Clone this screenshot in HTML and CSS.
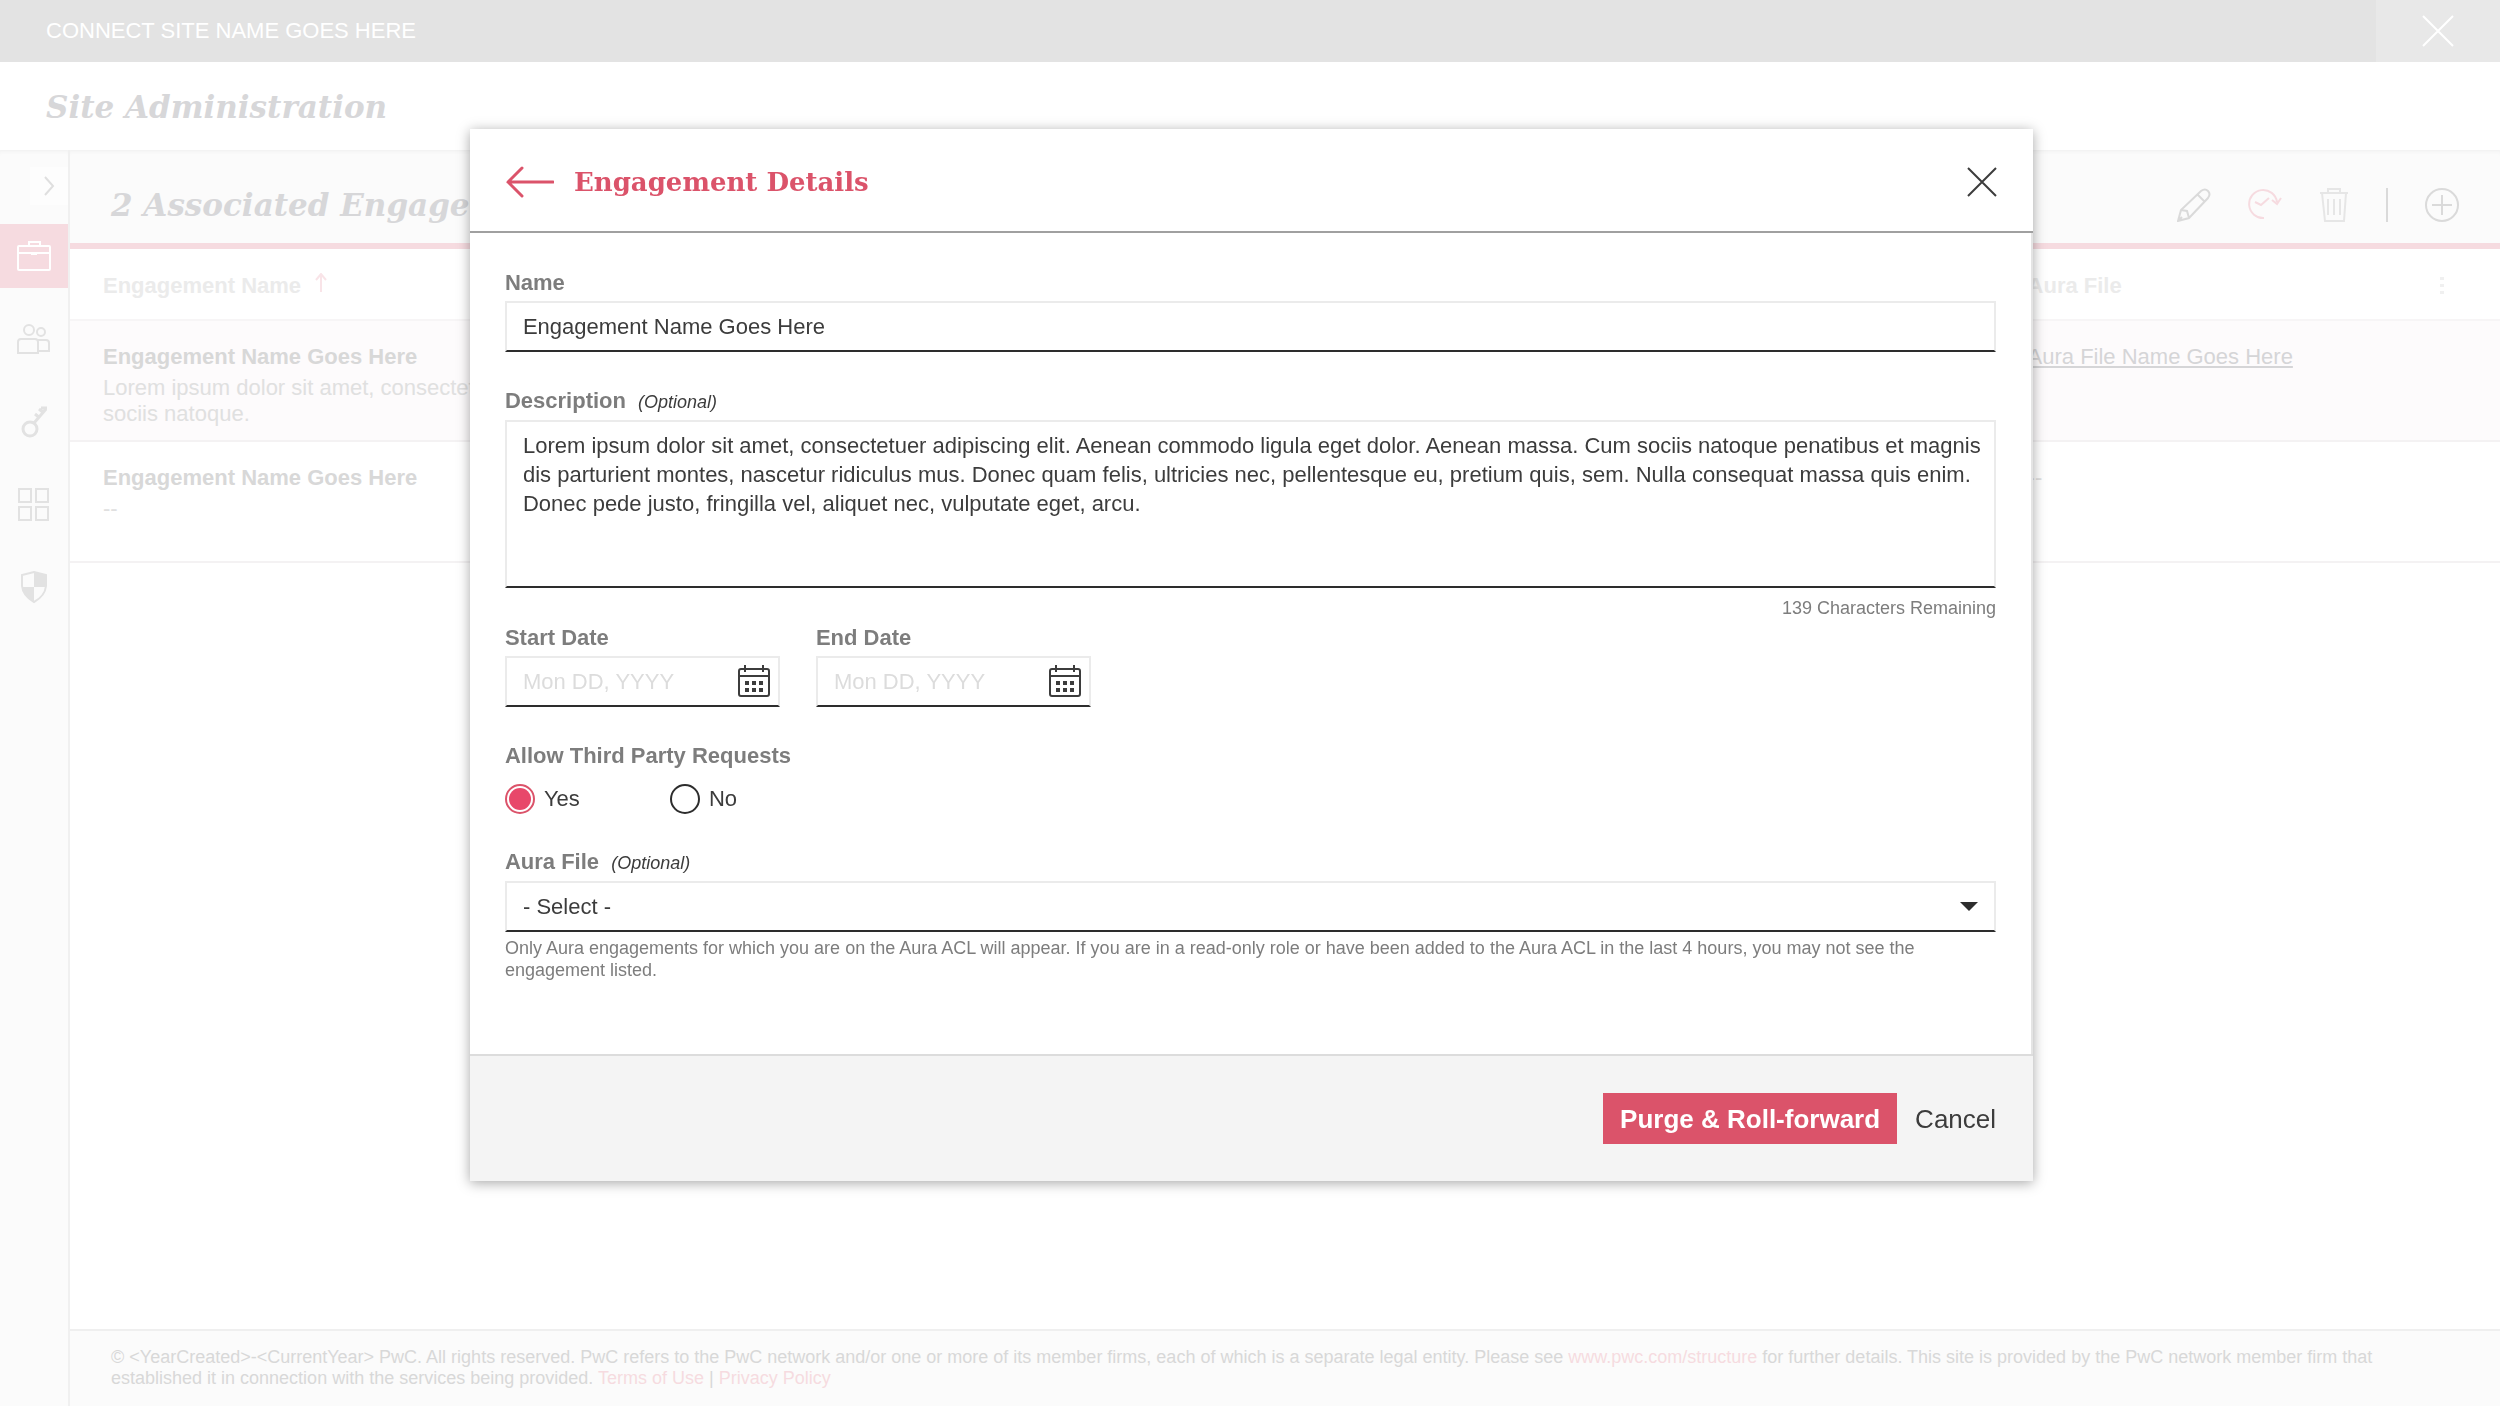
FILE: index.html
```html
<!DOCTYPE html>
<html lang="en">
<head>
    <meta charset="UTF-8">
    <meta name="viewport" content="width=device-width, initial-scale=1.0">
    <title>Site Administration</title>
    <link rel="stylesheet" href="styles.css">
</head>
<body>
    <div class="page">
        <header class="top-bar">
            <span class="site-name">CONNECT SITE NAME GOES HERE</span>
            <button class="top-close" aria-label="Close site">
                <svg width="32" height="32" viewBox="0 0 32 32"><path d="M1 1L31 31M31 1L1 31"/></svg>
            </button>
        </header>
        <div class="page-title">
            <h1>Site Administration</h1>
        </div>

        <div class="layout">
            <nav class="sidebar">
                <button class="toggle" aria-label="Expand menu">
                    <svg width="12" height="20" viewBox="0 0 12 20"><path d="M2 1L10 10L2 19"/></svg>
                </button>
                <a href="#" class="nav-item active" aria-label="Engagements">
                    <svg width="34" height="32" viewBox="0 0 34 32"><rect x="1" y="6" width="32" height="24" rx="1"/><path d="M12 6V2H23V6M1 13H33"/><path class="fill" d="M14 13H20V15H14Z"/></svg>
                </a>
                <a href="#" class="nav-item" aria-label="Users">
                    <svg width="34" height="32" viewBox="0 0 34 32"><circle cx="12" cy="7" r="5"/><circle cx="24" cy="9" r="4"/><path d="M1 30V19Q1 16 4 16H18Q21 16 21 19V30ZM21 17H29Q32 17 32 20V28H21"/></svg>
                </a>
                <a href="#" class="nav-item" aria-label="Permissions">
                    <svg class="key" width="34" height="32" viewBox="0 0 34 32"><circle cx="13" cy="23" r="7"/><path d="M17 17L29 3M22 3L27 7M18 8L23 12M24 2H30"/></svg>
                </a>
                <a href="#" class="nav-item" aria-label="Apps">
                    <svg width="34" height="34" viewBox="0 0 34 34"><path d="M2 1H14V14H2ZM19 1H31V14H19ZM2 19H14V32H2ZM19 19H31V32H19Z"/></svg>
                </a>
                <a href="#" class="nav-item" aria-label="Security">
                    <svg width="34" height="34" viewBox="0 0 34 34"><path d="M17 1L29 4V15Q28 25 17 31Q6 25 5 15V4Z"/><path class="fill" d="M17 1L29 4V16H17ZM17 16V31Q6 25 5 16Z"/></svg>
                </a>
            </nav>

            <div class="content">
                <div class="section-head">
                    <h2>2 Associated Engagements</h2>
                    <div class="actions">
                        <button aria-label="Edit">
                            <svg width="34" height="34" viewBox="0 0 34 34"><path d="M1 33L4 22L24 3Q28 0 31 3Q34 6 31 10L12 30ZM20 6L28 14M4 22L10 23L12 30M1 33L5 29"/></svg>
                        </button>
                        <button class="roll" aria-label="Roll-forward">
                            <svg width="34" height="34" viewBox="0 0 34 34"><path d="M16 30A14 14 0 1 1 29 14M24 12L29 16L33 10M7 14L13 17L21 10"/></svg>
                        </button>
                        <button class="trash" aria-label="Delete">
                            <svg width="30" height="34" viewBox="0 0 30 34"><path d="M1 5H29M9 5V1H21V5M3 5L6 33H25L27 5M9 11V27M15 11V27M21 11V27"/></svg>
                        </button>
                        <span class="divider"></span>
                        <button aria-label="Add">
                            <svg width="34" height="34" viewBox="0 0 34 34"><circle cx="17" cy="17" r="16"/><path d="M7 17H27M17 7V27"/></svg>
                        </button>
                    </div>
                </div>

                <table class="engagements">
                    <thead>
                        <tr>
                            <th class="col-name">Engagement Name
                                <svg class="sort" width="12" height="20" viewBox="0 0 12 20"><path d="M6 19V1M1 7L6 1L11 7"/></svg>
                            </th>
                            <th class="col-file">
                                <div class="file-head">Aura File
                                    <button class="more" aria-label="Column options">
                                        <svg width="4" height="18" viewBox="0 0 4 18"><path d="M0 0H4V3H0ZM0 7H4V10H0ZM0 14H4V17H0Z"/></svg>
                                    </button>
                                </div>
                            </th>
                        </tr>
                    </thead>
                    <tbody>
                        <tr class="selected">
                            <td>
                                <strong>Engagement Name Goes Here</strong>
                                <p>Lorem ipsum dolor sit amet, consectetuer elit.<br>sociis natoque.</p>
                            </td>
                            <td><a href="#">Aura File Name Goes Here</a></td>
                        </tr>
                        <tr>
                            <td>
                                <strong>Engagement Name Goes Here</strong>
                                <p>--</p>
                            </td>
                            <td>--</td>
                        </tr>
                    </tbody>
                </table>

                <footer class="page-footer">
                    © &lt;YearCreated&gt;-&lt;CurrentYear&gt; PwC. All rights reserved. PwC refers to the PwC network and/or one or more of its member firms, each of which is a separate legal entity. Please see <a href="#">www.pwc.com/structure</a> for further details. This site is provided by the PwC network member firm that established it in connection with the services being provided. <a href="#">Terms of Use</a> | <a href="#">Privacy Policy</a>
                </footer>
            </div>
        </div>
    </div>

    <div class="overlay">
        <form class="modal" role="dialog" aria-labelledby="modalTitle">
            <div class="modal-head">
                <button type="button" class="back" aria-label="Back">
                    <svg width="48" height="32" viewBox="0 0 48 32"><path d="M47 16H2M16 2L2 16L16 30"/></svg>
                </button>
                <h2 id="modalTitle">Engagement Details</h2>
                <button type="button" class="modal-close" aria-label="Close">
                    <svg width="30" height="30" viewBox="0 0 30 30"><path d="M1 1L29 29M29 1L1 29"/></svg>
                </button>
            </div>

            <div class="modal-body">
                <div class="field">
                    <label for="name">Name</label>
                    <input type="text" id="name" value="Engagement Name Goes Here">
                </div>

                <div class="field description">
                    <label for="description">Description <em>(Optional)</em></label>
                    <textarea id="description">Lorem ipsum dolor sit amet, consectetuer adipiscing elit. Aenean commodo ligula eget dolor. Aenean massa. Cum sociis natoque penatibus et magnis dis parturient montes, nascetur ridiculus mus. Donec quam felis, ultricies nec, pellentesque eu, pretium quis, sem. Nulla consequat massa quis enim. Donec pede justo, fringilla vel, aliquet nec, vulputate eget, arcu.</textarea>
                    <p class="remaining">139 Characters Remaining</p>
                </div>

                <div class="dates">
                    <div class="field">
                        <label for="startDate">Start Date</label>
                        <div class="date-box">
                            <input type="text" id="startDate" placeholder="Mon DD, YYYY">
                            <button type="button" aria-label="Pick start date">
                                <svg width="34" height="34" viewBox="0 0 34 34"><rect x="2" y="5" width="30" height="27" rx="2"/><path d="M2 12H32M8 1V8M26 1V8"/><path class="fill" d="M8 17H12V21H8ZM15 17H19V21H15ZM22 17H26V21H22ZM8 24H12V28H8ZM15 24H19V28H15ZM22 24H26V28H22Z"/></svg>
                            </button>
                        </div>
                    </div>
                    <div class="field">
                        <label for="endDate">End Date</label>
                        <div class="date-box">
                            <input type="text" id="endDate" placeholder="Mon DD, YYYY">
                            <button type="button" aria-label="Pick end date">
                                <svg width="34" height="34" viewBox="0 0 34 34"><rect x="2" y="5" width="30" height="27" rx="2"/><path d="M2 12H32M8 1V8M26 1V8"/><path class="fill" d="M8 17H12V21H8ZM15 17H19V21H15ZM22 17H26V21H22ZM8 24H12V28H8ZM15 24H19V28H15ZM22 24H26V28H22Z"/></svg>
                            </button>
                        </div>
                    </div>
                </div>

                <fieldset class="third-party">
                    <legend>Allow Third Party Requests</legend>
                    <div class="radios">
                        <label><input type="radio" name="thirdParty" value="yes" checked>Yes</label>
                        <label><input type="radio" name="thirdParty" value="no">No</label>
                    </div>
                </fieldset>

                <div class="field">
                    <label for="auraFile">Aura File <em>(Optional)</em></label>
                    <div class="select-box">
                        <select id="auraFile">
                            <option>- Select -</option>
                        </select>
                    </div>
                    <p class="help">Only Aura engagements for which you are on the Aura ACL will appear. If you are in a read-only role or have been added to the Aura ACL in the last 4 hours, you may not see the engagement listed.</p>
                </div>
            </div>

            <div class="modal-foot">
                <button type="submit" class="primary">Purge &amp; Roll-forward</button>
                <button type="button" class="cancel">Cancel</button>
            </div>
        </form>
    </div>
</body>
</html>
```
FILE: styles.css
```css
* {
    box-sizing: border-box;
}

body {
    margin: 0;
    background: #fff;
    font-family: Arial, "Liberation Sans", sans-serif;
    font-size: 22px;
    line-height: 26px;
    color: #3c3c3c;
}

h1, h2, p {
    margin: 0;
}

h1, h2 {
    font-family: Georgia, "DejaVu Serif", serif;
    font-weight: bold;
}

button {
    padding: 0;
    border: none;
    background: none;
    font: inherit;
    color: inherit;
    cursor: pointer;
}

svg {
    display: block;
    fill: none;
    stroke: currentColor;
    stroke-width: 2;
}

svg .fill {
    fill: currentColor;
    stroke: none;
}

/* Page behind the dialog */
.page {
    display: flex;
    flex-direction: column;
    min-height: 100vh;
}

.top-bar {
    display: flex;
    justify-content: space-between;
    height: 62px;
    background: #e3e3e3;
    color: #fff;
}

.site-name {
    padding: 18px 46px;
}

.top-close {
    display: flex;
    align-items: center;
    justify-content: center;
    width: 124px;
    background: #e8e8e8;
}

.page-title {
    height: 88px;
    padding: 23px 46px;
}

h1, .section-head h2 {
    font-size: 31px;
    line-height: 44px;
    font-style: italic;
    color: #d7d7d9;
}

.layout {
    display: flex;
    flex: 1;
}

.sidebar {
    display: flex;
    flex-direction: column;
    gap: 19px;
    width: 70px;
    padding-top: 17px;
    border-right: 2px solid #f0f0f0;
    background: #fbfbfb;
    box-shadow: inset 0 4px 4px -3px #eee;
    color: #e2e2e2;
}

.toggle {
    display: flex;
    align-items: center;
    justify-content: center;
    align-self: flex-end;
    width: 38px;
    height: 38px;
    background: #fdfdfd;
    color: #dfdfdf;
}

.nav-item {
    display: flex;
    align-items: center;
    justify-content: center;
    height: 64px;
    color: inherit;
}

.nav-item.active {
    background: #f6dbe0;
    color: #fff;
}

.key {
    stroke-width: 3;
}

.content {
    display: flex;
    flex-direction: column;
    flex: 1;
}

.section-head {
    display: flex;
    align-items: center;
    justify-content: space-between;
    height: 99px;
    padding: 16px 41px 0 41px;
    border-bottom: 6px solid #f6dbe0;
    background: #fbfbfb;
    box-shadow: inset 0 4px 4px -3px #eee;
}

.actions {
    display: flex;
    align-items: center;
    gap: 37px;
    color: #dadada;
}

.roll {
    color: #f6dbe0;
}

.trash {
    color: #e6e6e6;
}

.divider {
    width: 2px;
    height: 34px;
    background: #dadada;
}

.engagements {
    width: 100%;
    border-collapse: collapse;
    table-layout: fixed;
    text-align: left;
    color: #e0e0e0;
}

.engagements th {
    height: 71px;
    padding: 4px 0 0 33px;
    color: #ebebeb;
    border-bottom: 2px solid #f7f5f6;
}

.engagements td {
    height: 121px;
    padding: 23px 33px 0;
    border-bottom: 2px solid #f4f2f3;
    vertical-align: top;
}

.engagements .col-file {
    width: 20.8%;
}

.engagements strong {
    color: #d8d8d8;
}

.engagements p {
    padding-top: 5px;
}

.engagements a {
    color: #d5d5d7;
}

.selected {
    background: #fdfbfc;
}

.sort {
    display: inline-block;
    margin-left: 8px;
    color: #f9e4e8;
}

.file-head {
    display: flex;
    align-items: center;
    justify-content: space-between;
    padding-right: 56px;
}

.more svg {
    fill: #f0f0f0;
    stroke: none;
}

.page-footer {
    margin-top: auto;
    min-height: 77px;
    padding: 16px 41px;
    border-top: 2px solid #efefef;
    background: #fbfbfb;
    font-size: 18px;
    line-height: 21px;
    color: #d8d8d8;
}

.page-footer a {
    color: #f6dbe0;
    text-decoration: none;
}

/* Dialog */
.overlay {
    position: fixed;
    inset: 0;
    padding: 129px 0 0 3px;
    overflow: auto;
}

.modal {
    width: 62.6%;
    margin: 0 auto;
    background: #fff;
    box-shadow: 0 2px 12px rgba(0, 0, 0, 0.35);
}

.modal-head {
    display: flex;
    align-items: center;
    height: 104px;
    padding: 3px 36px 0;
    border-bottom: 2px solid #a0a0a0;
}

.modal-head h2 {
    margin-left: 20px;
    font-size: 26px;
    line-height: 40px;
    color: #db536a;
}

.back {
    color: #db536a;
}

.back svg {
    stroke-width: 3;
    stroke-linecap: round;
}

.modal-close {
    margin-left: auto;
}

.modal-body {
    padding: 37px 35px;
    border-right: 2px solid #e4e4e4;
}

.field {
    display: flex;
    flex-direction: column;
    gap: 5px;
    margin-bottom: 36px;
}

.field label, legend {
    font-weight: bold;
    color: #7d7d7d;
}

.field em {
    margin-left: 6px;
    font-size: 18px;
    font-weight: normal;
    color: #3c3c3c;
}

input[type="text"], textarea, select {
    width: 100%;
    height: 51px;
    margin: 0;
    padding: 0 16px;
    border: 2px solid #ebebeb;
    border-bottom-color: #2d2d2d;
    border-radius: 0;
    background: #fff;
    font: inherit;
    color: #3c3c3c;
    outline: none;
}

textarea {
    display: block;
    height: 168px;
    padding: 9px 8px 9px 16px;
    line-height: 29px;
    resize: none;
}

input::placeholder {
    color: #dcdcdc;
    opacity: 1;
}

.description {
    margin-bottom: 6px;
}

.remaining, .help {
    font-size: 18px;
    line-height: 22px;
    color: #7d7d7d;
}

.remaining {
    padding-top: 4px;
    text-align: right;
}

.dates {
    display: flex;
    gap: 36px;
}

.date-box {
    position: relative;
    width: 275px;
}

.date-box button {
    position: absolute;
    top: 8px;
    right: 9px;
}

.third-party {
    margin: 0 0 35px;
    padding: 0;
    border: none;
}

legend {
    padding: 0;
}

.radios {
    display: flex;
    padding-top: 15px;
}

.radios label {
    display: flex;
    align-items: center;
    gap: 9px;
    width: 165px;
}

input[type="radio"] {
    appearance: none;
    width: 30px;
    height: 30px;
    margin: 0;
    border: 2px solid #2d2d2d;
    border-radius: 50%;
}

input[type="radio"]:checked {
    padding: 2px;
    border-color: #db536a;
    background: #e8486a content-box;
}

.select-box {
    position: relative;
}

.select-box::after {
    content: "";
    position: absolute;
    top: 21px;
    right: 18px;
    border: 9px solid transparent;
    border-top-color: #2d2d2d;
    border-bottom: none;
    pointer-events: none;
}

select {
    appearance: none;
}

.modal-foot {
    display: flex;
    align-items: center;
    justify-content: flex-end;
    gap: 18px;
    height: 127px;
    padding: 0 37px;
    border-top: 2px solid #dcdcdc;
    background: #f4f4f4;
    font-size: 26px;
}

.primary {
    height: 51px;
    padding: 0 17px;
    background: #db536a;
    font-weight: bold;
    color: #fff;
}
```
